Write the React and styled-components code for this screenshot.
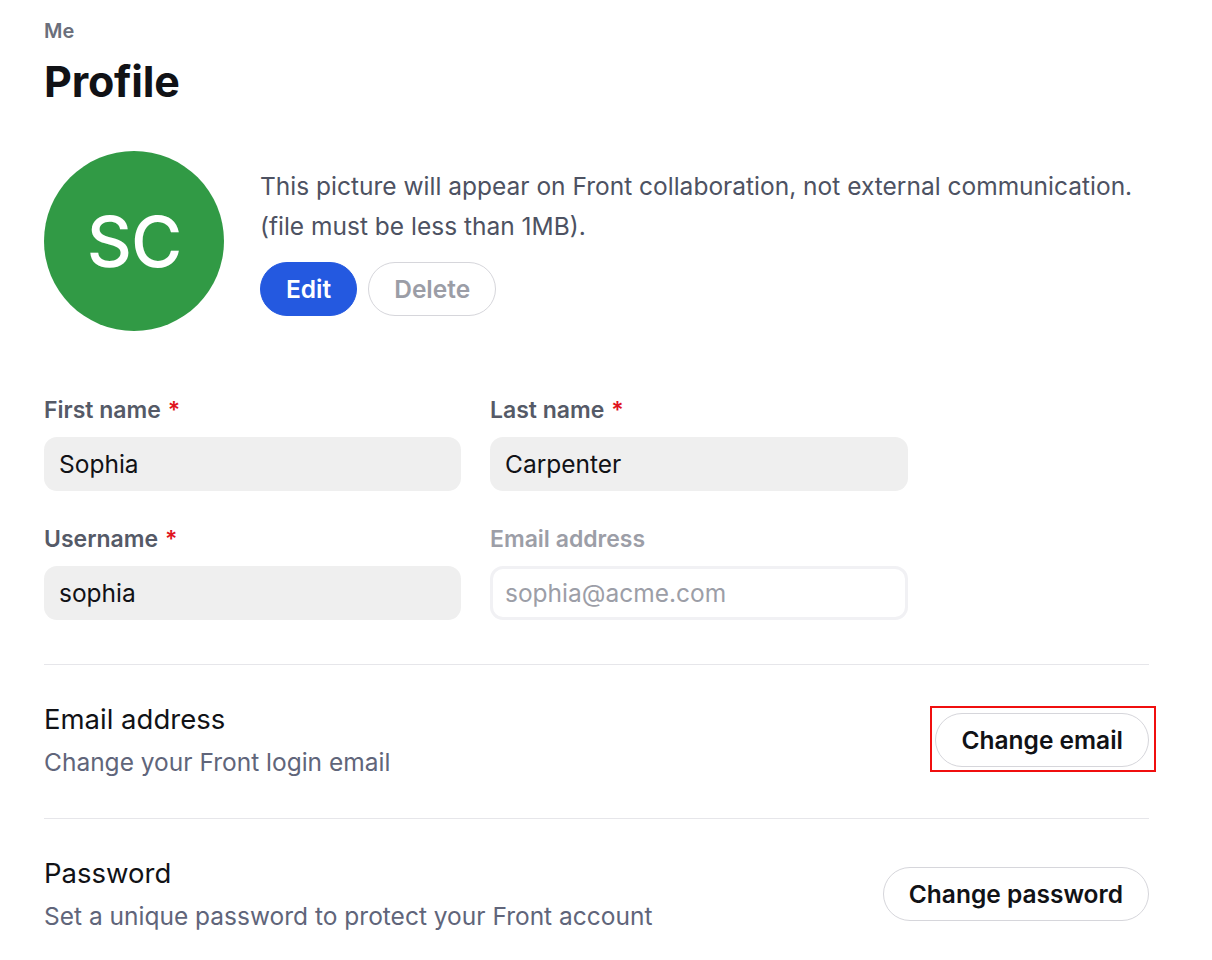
import React from "react";
import styled, { createGlobalStyle } from "styled-components";

const GlobalStyle = createGlobalStyle`
  body {
    margin: 0;
    background: #ffffff;
    font-family: Inter, "Noto Sans", sans-serif;
    color: #111216;
  }
`;

const Page = styled.div`
  width: 1105px;
  padding: 19px 0 0 44px;
`;

const Crumb = styled.div`
  font-size: 20px;
  line-height: 24px;
  font-weight: 600;
  color: #6b6f7b;
`;

const Title = styled.h1`
  margin: 13px 0 0;
  font-size: 43px;
  line-height: 50px;
  font-weight: 700;
  color: #111216;
  letter-spacing: -0.2px;
`;

const AvatarRow = styled.div`
  display: flex;
  align-items: center;
  gap: 36px;
  margin-top: 45px;
`;

const Avatar = styled.div`
  width: 180px;
  height: 180px;
  border-radius: 50%;
  background: #319a45;
  color: #ffffff;
  display: flex;
  align-items: center;
  justify-content: center;
  font-size: 70px;
  font-weight: 500;
  letter-spacing: -1px;
  flex-shrink: 0;
`;

const AvatarInfo = styled.div`
  display: flex;
  flex-direction: column;
  gap: 16px;
`;

const Hint = styled.p`
  margin: 0;
  font-size: 24.5px;
  line-height: 40px;
  color: #4d5262;
`;

const ButtonRow = styled.div`
  display: flex;
  gap: 11px;
`;

const PillButton = styled.button`
  position: relative;
  height: 54px;
  padding: 0 25px;
  border-radius: 27px;
  font-family: inherit;
  font-size: 24.5px;
  font-weight: 600;
  cursor: pointer;
  background: ${({ $primary }) => ($primary ? "#2459e0" : "#ffffff")};
  color: ${({ $primary, $muted }) =>
    $primary ? "#ffffff" : $muted ? "#9b9da6" : "#111216"};
  border: 1px solid ${({ $primary }) => ($primary ? "#2459e0" : "#d6d6db")};
  white-space: nowrap;

  &::after {
    content: "";
    display: ${({ $highlight }) => ($highlight ? "block" : "none")};
    position: absolute;
    top: -8px;
    left: -6px;
    right: -8px;
    bottom: -6px;
    border: 2px solid #f00f0f;
    pointer-events: none;
  }
`;

const FormGrid = styled.div`
  display: grid;
  grid-template-columns: 417px 418px;
  column-gap: 29px;
  row-gap: 34px;
  margin-top: 65px;
`;

const Field = styled.div`
  display: flex;
  flex-direction: column;
  gap: 13px;
`;

const Label = styled.label`
  font-size: 23px;
  line-height: 28px;
  font-weight: 600;
  color: ${({ $disabled }) => ($disabled ? "#9c9ea7" : "#555a67")};
`;

const Required = styled.span`
  color: #e0141e;
  margin-left: 7px;
`;

const Input = styled.input`
  box-sizing: border-box;
  height: 54px;
  width: 100%;
  border-radius: 13px;
  font-family: inherit;
  font-size: 24.5px;
  color: #111216;
  background: ${({ disabled }) => (disabled ? "#ffffff" : "#efefef")};
  border: ${({ disabled }) => (disabled ? "3px solid #f1f1f4" : "none")};
  padding: 0 0 0 ${({ disabled }) => (disabled ? "12px" : "15px")};
  outline: none;
  &::placeholder {
    color: #9c9ea7;
  }
`;

const Divider = styled.hr`
  border: none;
  border-top: 1px solid #e6e6ea;
  margin: 44px 0 0;
`;

const SettingRow = styled.div`
  display: flex;
  align-items: center;
  justify-content: space-between;
  padding: 38px 0 41px;
  border-bottom: ${({ $last }) => ($last ? "none" : "1px solid #e6e6ea")};
`;

const SettingText = styled.div`
  display: flex;
  flex-direction: column;
  gap: 12px;
`;

const SettingTitle = styled.div`
  font-size: 27.5px;
  line-height: 32px;
  color: #111216;
`;

const SettingDesc = styled.div`
  font-size: 24.5px;
  line-height: 30px;
  color: #60657a;
`;

const settings = [
  { title: "Email address", desc: "Change your Front login email", action: "Change email", highlight: true },
  { title: "Password", desc: "Set a unique password to protect your Front account", action: "Change password" },
];

export default function App() {
  return (
    <Page>
      <GlobalStyle />
      <Crumb>Me</Crumb>
      <Title>Profile</Title>

      <AvatarRow>
        <Avatar>SC</Avatar>
        <AvatarInfo>
          <Hint>
            This picture will appear on Front collaboration, not external communication.
            <br />
            (file must be less than 1MB).
          </Hint>
          <ButtonRow>
            <PillButton $primary>Edit</PillButton>
            <PillButton $muted>Delete</PillButton>
          </ButtonRow>
        </AvatarInfo>
      </AvatarRow>

      <FormGrid>
        <Field>
          <Label>First name<Required>*</Required></Label>
          <Input defaultValue="Sophia" />
        </Field>
        <Field>
          <Label>Last name<Required>*</Required></Label>
          <Input defaultValue="Carpenter" />
        </Field>
        <Field>
          <Label>Username<Required>*</Required></Label>
          <Input defaultValue="sophia" />
        </Field>
        <Field>
          <Label $disabled>Email address</Label>
          <Input disabled placeholder="sophia@acme.com" />
        </Field>
      </FormGrid>

      <Divider />

      {settings.map((s, i) => (
        <SettingRow key={s.title} $last={i === settings.length - 1}>
          <SettingText>
            <SettingTitle>{s.title}</SettingTitle>
            <SettingDesc>{s.desc}</SettingDesc>
          </SettingText>
          <PillButton $highlight={s.highlight}>{s.action}</PillButton>
        </SettingRow>
      ))}
    </Page>
  );
}
